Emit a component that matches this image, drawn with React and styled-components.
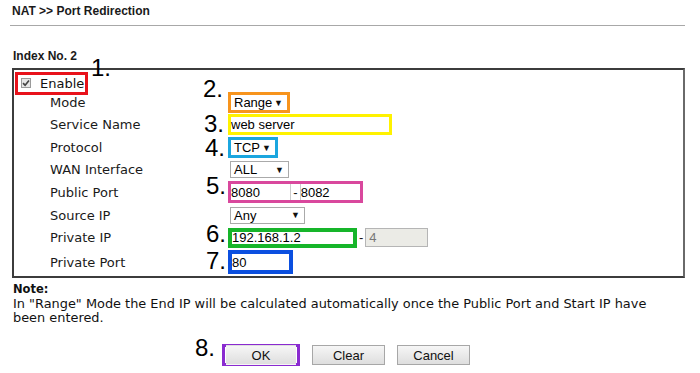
import React from "react";
import styled, { createGlobalStyle } from "styled-components";

const GlobalStyle = createGlobalStyle`
  html, body {
    margin: 0;
    padding: 0;
    background: #fff;
  }
`;

const Page = styled.div`
  width: 700px;
  height: 373px;
  overflow: hidden;
  padding: 0 15px 0 10px;
  box-sizing: border-box;
  font-family: "DejaVu Sans", Verdana, sans-serif;
  color: #111;
`;

const Title = styled.h1`
  margin: 0;
  padding: 4px 0 0 2px;
  font: bold 12px/15px "Liberation Sans", Arial, sans-serif;
  color: #1a1a1a;
`;

const Rule = styled.hr`
  margin: 6px 0 0;
  border: 0;
  border-top: 1px solid #a8a8a8;
`;

const IndexTitle = styled.div`
  margin: 23px 0 0 3px;
  font: bold 12px/15px "Liberation Sans", Arial, sans-serif;
  color: #1a1a1a;
`;

const FormBox = styled.div`
  margin: 4px 0 0 2px;
  border: 2px solid #3c3c3c;
  border-right-color: #6a6a6a;
  padding-bottom: 1px;
`;

const Row = styled.div`
  position: relative;
  display: grid;
  grid-template-columns: 214px 1fr;
  align-items: center;
  height: ${(p) => p.$h}px;
`;

const Label = styled.div`
  padding-left: 36px;
  font-size: 13px;
  color: #1a1a1a;
`;

const Cell = styled.div`
  position: relative;
  display: flex;
  align-items: center;
`;

const Marker = styled.span`
  position: absolute;
  left: ${(p) => p.$x}px;
  top: ${(p) => p.$y}px;
  font: 24px/24px "Liberation Sans", Arial, sans-serif;
  color: #000;
  pointer-events: none;
`;

const Highlight = styled.div`
  display: flex;
  align-items: center;
  box-sizing: border-box;
  width: ${(p) => p.$w}px;
  height: ${(p) => p.$h}px;
  border: ${(p) => p.$t || 3}px solid ${(p) => p.$c};
  background: #fff;
`;

const EnableBox = styled(Highlight)`
  margin: 2px 0 0 1px;
  padding-left: 3px;
  gap: 9px;
  font-size: 13px;
`;

const Check = styled.span`
  width: 10px;
  height: 10px;
  box-sizing: border-box;
  border: 1px solid #9a9a9a;
  background: #e6e6e6;
  display: inline-flex;
  align-items: center;
  justify-content: center;
  margin-top: -2px;
`;

const Select = styled.div`
  display: flex;
  align-items: center;
  justify-content: space-between;
  box-sizing: border-box;
  width: ${(p) => p.$w}px;
  height: ${(p) => p.$h || 17}px;
  padding: 0 4px 0 3px;
  border: ${(p) => (p.$bare ? "0" : "1px solid #aaa")};
  background: #fff;
  font: 13px "Liberation Sans", Arial, sans-serif;
  color: #000;
  margin-left: ${(p) => p.$ml || 0}px;
`;

const Arrow = styled.span`
  font-size: 9px;
  color: #111;
`;

const Field = styled.div`
  box-sizing: border-box;
  width: ${(p) => p.$w}px;
  height: 100%;
  display: flex;
  align-items: center;
  border-left: ${(p) => (p.$divL ? "1px solid #ccc" : "0")};
  border-right: ${(p) => (p.$divR ? "1px solid #ccc" : "0")};
  background: #fff;
  color: #000;
  font: 13px "Liberation Sans", Arial, sans-serif;
`;

const DisabledField = styled.div`
  box-sizing: border-box;
  width: 63px;
  height: 19px;
  display: flex;
  align-items: center;
  padding-left: 3px;
  border: 1px solid #b5b5b5;
  background: #ebebe6;
  color: #777;
  font: 13px "Liberation Sans", Arial, sans-serif;
`;

const Dash = styled.span`
  font: 13px "Liberation Sans", Arial, sans-serif;
  padding: 0 2px;
`;

const Note = styled.div`
  max-width: 655px;
  margin: 4px 0 0 3px;
  font-size: 12.9px;
  line-height: 14px;
  color: #111;
`;

const NoteHead = styled.div`
  font-weight: bold;
  font-size: 11.5px;
  line-height: 15px;
`;

const Buttons = styled.div`
  position: relative;
  display: flex;
  align-items: center;
  gap: 12px;
  margin: 19px 0 0 212px;
`;

const Button = styled.button`
  box-sizing: border-box;
  width: ${(p) => p.$w || 73}px;
  height: 20px;
  border: 1px solid ${(p) => (p.$flat ? "transparent" : "#a7a7a7")};
  background: linear-gradient(#f6f6f6, #dedede);
  font: 13px "Liberation Sans", Arial, sans-serif;
  color: #111;
  padding: 0;
`;

const OkFrame = styled(Highlight)`
  justify-content: center;
  padding: 1px;
`;

const CheckIcon = () => (
  <svg width="8" height="8" viewBox="0 0 8 8">
    <path d="M1 4.2 L3.1 6.2 L7 1.4" fill="none" stroke="#444" strokeWidth="1.6" />
  </svg>
);

export default function App() {
  return (
    <>
      <GlobalStyle />
      <Page>
        <Title>NAT &gt;&gt; Port Redirection</Title>
        <Rule />
        <IndexTitle>Index No. 2</IndexTitle>
        <FormBox>
          <Row $h={22}>
            <Cell>
              <EnableBox $w={73} $h={23} $c="#e8121b">
                <Check>
                  <CheckIcon />
                </Check>
                Enable
              </EnableBox>
            </Cell>
            <Marker $x={77} $y={-14}>1.</Marker>
          </Row>
          <Row $h={21}>
            <Label>Mode</Label>
            <Cell>
              <Marker $x={-25} $y={-15}>2.</Marker>
              <Highlight $w={62} $h={21} $c="#f7941d">
                <Select $w={56} $h={15} $bare>
                  Range <Arrow>▼</Arrow>
                </Select>
              </Highlight>
            </Cell>
          </Row>
          <Row $h={23}>
            <Label>Service Name</Label>
            <Cell>
              <Marker $x={-24} $y={-2}>3.</Marker>
              <Highlight $w={164} $h={21} $c="#fff200">
                <Field $w={158}>web server</Field>
              </Highlight>
            </Cell>
          </Row>
          <Row $h={23}>
            <Label>Protocol</Label>
            <Cell>
              <Marker $x={-23} $y={-1}>4.</Marker>
              <Highlight $w={50} $h={21} $c="#1ba6df">
                <Select $w={44} $h={15} $bare>
                  TCP <Arrow>▼</Arrow>
                </Select>
              </Highlight>
            </Cell>
          </Row>
          <Row $h={21}>
            <Label>WAN Interface</Label>
            <Cell>
              <Select $w={59} $ml={2}>
                ALL <Arrow>▼</Arrow>
              </Select>
            </Cell>
          </Row>
          <Row $h={24}>
            <Label>Public Port</Label>
            <Cell>
              <Marker $x={-22} $y={-7}>5.</Marker>
              <Highlight $w={135} $h={22} $c="#d9489d">
                <Field $w={61} $divR>8080</Field>
                <Dash>-</Dash>
                <Field $w={61} $divL>8082</Field>
              </Highlight>
            </Cell>
          </Row>
          <Row $h={22}>
            <Label>Source IP</Label>
            <Cell>
              <Select $w={75} $ml={2}>
                Any <Arrow>▼</Arrow>
              </Select>
            </Cell>
          </Row>
          <Row $h={23}>
            <Label>Private IP</Label>
            <Cell>
              <Marker $x={-22} $y={-6}>6.</Marker>
              <Highlight $w={129} $h={20} $c="#16b52a" $t={4}>
                <Field $w={121}>192.168.1.2</Field>
              </Highlight>
              <Dash>-</Dash>
              <DisabledField>4</DisabledField>
            </Cell>
          </Row>
          <Row $h={26}>
            <Label>Private Port</Label>
            <Cell>
              <Marker $x={-22} $y={-1}>7.</Marker>
              <Highlight $w={65} $h={24} $c="#0b4fe0" $t={4}>
                <Field $w={57}>80</Field>
              </Highlight>
            </Cell>
          </Row>
        </FormBox>
        <Note>
          <NoteHead>Note:</NoteHead>
          In "Range" Mode the End IP will be calculated automatically once the
          Public Port and Start IP have been entered.
        </Note>
        <Buttons>
          <Marker $x={-27} $y={-8}>8.</Marker>
          <OkFrame $w={78} $h={22} $c="#8a2bd0">
            <Button $w={70} $flat>OK</Button>
          </OkFrame>
          <Button>Clear</Button>
          <Button>Cancel</Button>
        </Buttons>
      </Page>
    </>
  );
}
